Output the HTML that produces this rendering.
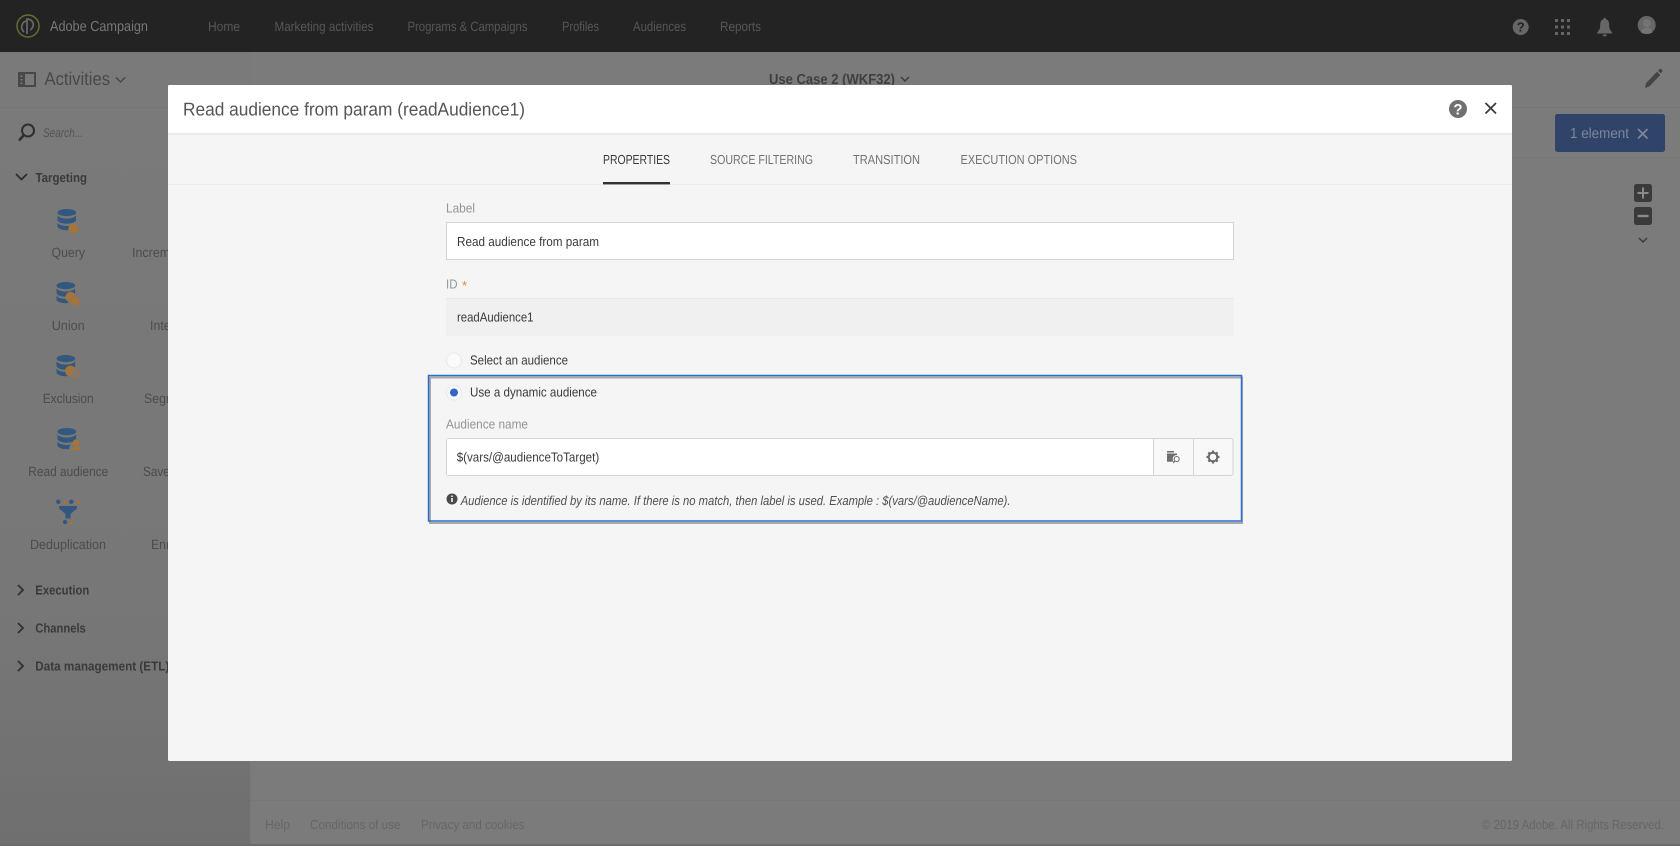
<!DOCTYPE html>
<html lang="en">
<head>
<meta charset="utf-8">
<title>Adobe Campaign</title>
<style>
html,body{margin:0;padding:0;width:1680px;height:846px;overflow:hidden;background:#7a7a7a}
svg{display:block;filter:blur(.35px)}
text{font-family:"Liberation Sans",sans-serif;text-rendering:geometricPrecision;white-space:pre}
</style>
</head>
<body>
<svg xmlns="http://www.w3.org/2000/svg" width="1680" height="846" viewBox="0 0 1680 846">
<defs>
<linearGradient id="side" x1="0" y1="0" x2="0" y2="1"><stop offset="0" stop-color="#7a7a7a"/><stop offset=".7" stop-color="#777"/><stop offset="1" stop-color="#6f6f6f"/></linearGradient>
<g id="db" fill="#33577f">
<ellipse cx="9.500" cy="3.600" rx="9.300" ry="3.600"/>
<path d="M.2 6.400c1.500 2.200 5 3.200 9.300 3.200s7.800-1 9.300-3.200v5.100c-1.500 2.200-5 3.200-9.300 3.200S1.700 13.700.2 11.500z"/>
<path d="M.2 13.800c1.500 2.200 5 3.200 9.300 3.200 1.800 0 3-.1 4-.4-1.200 1.300-1.800 2.900-1.800 4.500-.7.100-1.400.100-2.200.100-4.300 0-7.800-1.400-9.300-3.100z"/>
</g>
</defs>

<!-- Page -->
<rect width="1680" height="846" fill="#7b7b7b"/>
<rect x="0" y="52" width="250" height="794" fill="url(#side)"/>
<rect x="250" y="52" width="1" height="794" fill="#787878"/>
<rect x="0" y="107" width="1680" height="1" fill="#767676"/>
<rect x="250" y="157" width="1430" height="1" fill="#767676"/>
<rect x="250" y="800" width="1430" height="1" fill="#767676"/>
<rect x="0" y="844" width="1680" height="2" fill="#6a6a6a"/>

<!-- Top bar -->
<rect width="1680" height="52" fill="#232323"/>
<circle cx="28" cy="26" r="11" fill="none" stroke="#666e2e" stroke-width="1.500"/>
<path d="M24 32c-2-2-3-4-2-7 1-3 3-4 5-4M27 34V19c2 0 5 1 6 4 1 3-1 6-3 7" fill="none" stroke="#666" stroke-width="1.800"/>
<text x="50" y="31" font-size="14.500" fill="#777" textLength="98" lengthAdjust="spacingAndGlyphs">Adobe Campaign</text>
<g font-size="13.500" fill="#565656">
<text x="208" y="31" textLength="32" lengthAdjust="spacingAndGlyphs">Home</text>
<text x="274.500" y="31" textLength="99" lengthAdjust="spacingAndGlyphs">Marketing activities</text>
<text x="407.500" y="31" textLength="120" lengthAdjust="spacingAndGlyphs">Programs &amp; Campaigns</text>
<text x="562" y="31" textLength="37" lengthAdjust="spacingAndGlyphs">Profiles</text>
<text x="633" y="31" textLength="53" lengthAdjust="spacingAndGlyphs">Audiences</text>
<text x="720" y="31" textLength="41" lengthAdjust="spacingAndGlyphs">Reports</text>
</g>
<circle cx="1520.700" cy="27" r="8" fill="#666"/>
<text x="1520.700" y="31.500" font-size="13" font-weight="bold" fill="#232323" text-anchor="middle">?</text>
<g fill="#666">
<rect x="1555" y="19" width="3" height="3"/><rect x="1561" y="19" width="3" height="3"/><rect x="1567" y="19" width="3" height="3"/>
<rect x="1555" y="25.500" width="3" height="3"/><rect x="1561" y="25.500" width="3" height="3"/><rect x="1567" y="25.500" width="3" height="3"/>
<rect x="1555" y="32" width="3" height="3"/><rect x="1561" y="32" width="3" height="3"/><rect x="1567" y="32" width="3" height="3"/>
<path d="M1604.700 19c3.600 0 4.500 3 4.500 6.500 0 3.500 1.300 5 3 7v1h-15v-1c1.700-2 3-3.500 3-7 0-3.500.9-6.500 4.500-6.500zM1602.500 34.500h4.400c-.2 1.300-1.100 2-2.200 2s-2-.7-2.200-2z"/>
<circle cx="1604.700" cy="19" r="1.200"/>
<circle cx="1646.700" cy="25" r="9"/>
</g>
<circle cx="1646.700" cy="23" r="4" fill="#747474"/>
<path d="M1641 32.500c.7-3.500 3-5 5.700-5s5 1.500 5.700 5c-1.500 1-3.500 1.500-5.700 1.500s-4.200-.5-5.700-1.500z" fill="#747474"/>

<!-- Sub header -->
<rect x="19" y="73" width="16" height="13" fill="none" stroke="#484848" stroke-width="2"/>
<rect x="19" y="73" width="6" height="13" fill="#484848"/>
<g fill="#7a7a7a"><rect x="20.500" y="75.500" width="2" height="1.500"/><rect x="20.500" y="79" width="2" height="1.500"/><rect x="20.500" y="82.500" width="2" height="1.500"/></g>
<text x="44.500" y="85" font-size="18.500" fill="#484848" textLength="65.500" lengthAdjust="spacingAndGlyphs">Activities</text>
<path d="M116 77.500l4.500 4.500 4.500-4.500" fill="none" stroke="#484848" stroke-width="1.500"/>
<text x="769" y="84" font-size="14.500" font-weight="bold" fill="#3f3f3f" textLength="126" lengthAdjust="spacingAndGlyphs">Use Case 2 (WKF32)</text>
<path d="M901 77l4 4 4-4" fill="none" stroke="#3c3c3c" stroke-width="1.500"/>
<path d="M1645 88l1.200-5 10.800-11.300 3.300 3.300-10.800 11.300zM1658 70.700l1.700-1.700c.4-.4 1-.4 1.400 0l1.200 1.200c.4.4.4 1 0 1.400l-1.700 1.700z" fill="#444"/>

<!-- Search -->
<circle cx="28" cy="130.500" r="6" fill="none" stroke="#2f2f2f" stroke-width="2"/>
<path d="M23.500 135.500l-4.500 5" stroke="#2f2f2f" stroke-width="2.500" fill="none"/>
<text x="43" y="137" font-size="12.500" font-style="italic" fill="#555" textLength="40" lengthAdjust="spacingAndGlyphs">Search...</text>

<!-- Sidebar groups -->
<path d="M16 174l5.500 5.500 5.500-5.500" fill="none" stroke="#2c2c2c" stroke-width="1.800"/>
<text x="35.500" y="182" font-size="13" font-weight="bold" fill="#3a3a3a" textLength="51.500" lengthAdjust="spacingAndGlyphs">Targeting</text>

<use href="#db" x="57.300" y="209"/>
<circle cx="73.300" cy="228.700" r="5" fill="#a4743a"/>
<use href="#db" x="56.300" y="282"/>
<circle cx="70.500" cy="297" r="5.200" fill="#a4743a"/>
<circle cx="74.800" cy="301" r="5" fill="#a4743a" stroke="#777" stroke-width=".6"/>
<use href="#db" x="56.300" y="355"/>
<circle cx="70.500" cy="371" r="5.400" fill="#a4743a"/>
<circle cx="74.500" cy="374" r="4" fill="#7a7a7a" stroke="#a4743a" stroke-width="1.300"/>
<use href="#db" x="57.300" y="428"/>
<circle cx="76" cy="442.500" r="3.200" fill="#a4743a"/>
<path d="M74.500 445h3v2c2 .4 3.300 1.200 3.300 3h-9.800c0-1.800 1.500-2.600 3.500-3z" fill="#a4743a"/>
<g fill="#33577f">
<circle cx="58.300" cy="501.800" r="2.200"/><circle cx="71.300" cy="501.800" r="2.200"/><circle cx="65" cy="522" r="2.200"/>
<path d="M59 506h18v2.500l-6.500 5.500v4.500h-5V514L59 508.500z"/>
</g>
<g fill="#a4743a">
<path d="M65 499.500l2.400 4h-4.800zM78 499.500l2.400 4h-4.800zM71.500 520l2.400 4h-4.800z"/>
</g>

<g font-size="13.500" fill="#4c4c4c">
<text x="51.500" y="257" textLength="33.500" lengthAdjust="spacingAndGlyphs">Query</text>
<text x="51.700" y="330" textLength="33" lengthAdjust="spacingAndGlyphs">Union</text>
<text x="42.700" y="403" textLength="51" lengthAdjust="spacingAndGlyphs">Exclusion</text>
<text x="28.300" y="476" textLength="80" lengthAdjust="spacingAndGlyphs">Read audience</text>
<text x="30" y="549" textLength="76" lengthAdjust="spacingAndGlyphs">Deduplication</text>
<text x="132" y="257" textLength="100" lengthAdjust="spacingAndGlyphs">Incremental query</text>
<text x="150" y="330" textLength="64" lengthAdjust="spacingAndGlyphs">Intersection</text>
<text x="144" y="403" textLength="76" lengthAdjust="spacingAndGlyphs">Segmentation</text>
<text x="143" y="476" textLength="78" lengthAdjust="spacingAndGlyphs">Save audience</text>
<text x="151" y="549" textLength="62" lengthAdjust="spacingAndGlyphs">Enrichment</text>
</g>

<g fill="none" stroke="#303030" stroke-width="1.800">
<path d="M18 585l5 5-5 5"/><path d="M18 623l5 5-5 5"/><path d="M18 661l5 5-5 5"/>
</g>
<g font-size="13" font-weight="bold" fill="#3a3a3a">
<text x="35.300" y="594.500" textLength="54" lengthAdjust="spacingAndGlyphs">Execution</text>
<text x="35.300" y="632.500" textLength="50.500" lengthAdjust="spacingAndGlyphs">Channels</text>
<text x="35.300" y="670.500" textLength="134" lengthAdjust="spacingAndGlyphs">Data management (ETL)</text>
</g>

<!-- Right controls -->
<rect x="1555" y="114" width="110" height="38" rx="2.500" fill="#2f4468"/>
<text x="1570" y="138" font-size="14.500" fill="#7d8798" textLength="59" lengthAdjust="spacingAndGlyphs">1 element</text>
<path d="M1638 129l9.500 9.500M1647.500 129l-9.500 9.500" stroke="#7d8798" stroke-width="1.800" fill="none"/>
<rect x="1634" y="184" width="18" height="18" rx="2.500" fill="#3a3a3a"/>
<path d="M1643 187.500v11M1637.500 193h11" stroke="#8a8a8a" stroke-width="2" fill="none"/>
<rect x="1634" y="207" width="18" height="18" rx="2.500" fill="#3a3a3a"/>
<path d="M1637.500 216h11" stroke="#8a8a8a" stroke-width="2.400" fill="none"/>
<path d="M1639 238l4 4 4-4" fill="none" stroke="#3a3a3a" stroke-width="1.500"/>

<!-- Footer -->
<g font-size="13" fill="#666">
<text x="265" y="829" textLength="25" lengthAdjust="spacingAndGlyphs">Help</text>
<text x="310" y="829" textLength="90.500" lengthAdjust="spacingAndGlyphs">Conditions of use</text>
<text x="421" y="829" textLength="103.500" lengthAdjust="spacingAndGlyphs">Privacy and cookies</text>
<text x="1482" y="829" textLength="182" lengthAdjust="spacingAndGlyphs">© 2019 Adobe. All Rights Reserved.</text>
</g>

<!-- Modal -->
<rect x="168" y="85" width="1344" height="676" rx="1.500" fill="#f5f5f5"/>
<path d="M168 133V86.500c0-.8.700-1.500 1.500-1.500h1341c.8 0 1.500.700 1.500 1.500V133z" fill="#fff"/>
<rect x="168" y="133" width="1344" height="2" fill="#ebebeb"/>
<rect x="168" y="184" width="1344" height="1" fill="#ebebeb"/>
<text x="183" y="115.500" font-size="18.500" fill="#555" textLength="342" lengthAdjust="spacingAndGlyphs">Read audience from param (readAudience1)</text>
<circle cx="1458" cy="109" r="9" fill="#707070"/>
<text x="1458" y="114.300" font-size="15" font-weight="bold" fill="#fff" text-anchor="middle">?</text>
<path d="M1485.500 103l10.500 10.500M1496 103l-10.500 10.500" stroke="#3c3c3c" stroke-width="1.800" fill="none"/>

<!-- Tabs -->
<g font-size="13">
<text x="603" y="164" fill="#3a3a3a" textLength="67" lengthAdjust="spacingAndGlyphs">PROPERTIES</text>
<text x="710" y="164" fill="#727272" textLength="103" lengthAdjust="spacingAndGlyphs">SOURCE FILTERING</text>
<text x="853" y="164" fill="#727272" textLength="67" lengthAdjust="spacingAndGlyphs">TRANSITION</text>
<text x="960.500" y="164" fill="#727272" textLength="116.500" lengthAdjust="spacingAndGlyphs">EXECUTION OPTIONS</text>
</g>
<rect x="603" y="182" width="67" height="2.400" fill="#323232"/>

<!-- Label -->
<text x="446" y="212.500" font-size="13" fill="#949494" textLength="29" lengthAdjust="spacingAndGlyphs">Label</text>
<rect x="446.500" y="222.500" width="787" height="37" fill="#fff" stroke="#d4d4d4"/>
<text x="457" y="246" font-size="13" fill="#3a3a3a" textLength="142" lengthAdjust="spacingAndGlyphs">Read audience from param</text>

<!-- ID -->
<text x="446" y="288.500" font-size="13" fill="#949494" textLength="11.500" lengthAdjust="spacingAndGlyphs">ID</text>
<text x="462" y="290" font-size="13" fill="#e68a3c">*</text>
<rect x="446" y="298" width="787.500" height="38" fill="#f0f0f0"/>
<rect x="446" y="298" width="787.500" height="1" fill="#e8e8e8"/>
<text x="457" y="321.500" font-size="13" fill="#3a3a3a" textLength="76.500" lengthAdjust="spacingAndGlyphs">readAudience1</text>

<!-- Radios -->
<circle cx="454" cy="360.500" r="7.500" fill="#fafafa" stroke="#e8e8e8"/>
<text x="470" y="364.500" font-size="13" fill="#3a3a3a" textLength="98" lengthAdjust="spacingAndGlyphs">Select an audience</text>

<!-- Highlight box -->
<rect x="430" y="377.500" width="812" height="145.500" fill="none" stroke="#a8a8a8" stroke-width="2"/>
<rect x="428.500" y="375.500" width="813" height="145.500" fill="none" stroke="#2a6fce" stroke-width="1.500"/>

<circle cx="454" cy="392.500" r="7.500" fill="#fafafa" stroke="#e8e8e8"/>
<circle cx="454" cy="392.500" r="4" fill="#2f68c8"/>
<text x="470" y="396.500" font-size="13" fill="#3a3a3a" textLength="127" lengthAdjust="spacingAndGlyphs">Use a dynamic audience</text>

<text x="446" y="428.500" font-size="13" fill="#949494" textLength="82" lengthAdjust="spacingAndGlyphs">Audience name</text>
<rect x="446.500" y="438.500" width="786.500" height="37" rx="2" fill="#f8f8f8" stroke="#d4d4d4"/>
<rect x="447" y="439" width="706" height="36" fill="#fff"/>
<rect x="1153" y="438.500" width="1" height="37" fill="#d4d4d4"/>
<rect x="1193" y="438.500" width="1" height="37" fill="#d4d4d4"/>
<text x="456.700" y="461.500" font-size="13" fill="#3a3a3a" textLength="142.500" lengthAdjust="spacingAndGlyphs">$(vars/@audienceToTarget)</text>

<!-- Folder search -->
<path d="M1167 451h7v1.500h-7z" fill="#6e6e6e"/>
<path d="M1167 453.500h10v8.200h-10z" fill="#6e6e6e"/>
<circle cx="1176.700" cy="459" r="4" fill="#f8f8f8"/>
<circle cx="1176.700" cy="459" r="2.500" fill="none" stroke="#6e6e6e" stroke-width="1.100"/>
<path d="M1175 461l-1.800 1.900" stroke="#6e6e6e" stroke-width="1.200" fill="none"/>
<!-- Gear -->
<circle cx="1213" cy="457" r="4.300" fill="none" stroke="#6a6a6a" stroke-width="2"/>
<path d="M1213 450.500v2M1213 461.500v2M1206.500 457h2M1217.500 457h2M1208.400 452.400l1.400 1.400M1216.200 460.200l1.400 1.400M1217.600 452.400l-1.400 1.400M1209.800 460.200l-1.400 1.400" stroke="#6a6a6a" stroke-width="2.200" fill="none"/>

<!-- Hint -->
<circle cx="452" cy="499" r="5.500" fill="#4a4a4a"/>
<rect x="451.200" y="498" width="1.600" height="4" fill="#f5f5f5"/>
<rect x="451.200" y="495.500" width="1.600" height="1.500" fill="#f5f5f5"/>
<text x="460.700" y="505" font-size="13" font-style="italic" fill="#4f4f4f" textLength="549.800" lengthAdjust="spacingAndGlyphs">Audience is identified by its name. If there is no match, then label is used. Example : $(vars/@audienceName).</text>
</svg>
</body>
</html>
